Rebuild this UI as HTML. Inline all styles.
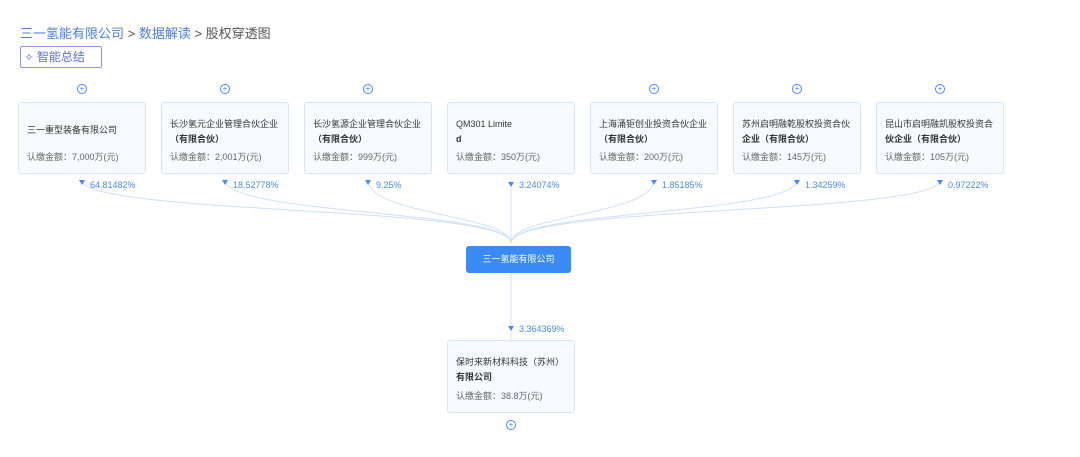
<!DOCTYPE html>
<html><head><meta charset="utf-8"><style>
body{margin:0;width:1080px;height:457px;background:#fff;font-family:"Liberation Sans","Noto Sans CJK SC",sans-serif;position:relative;overflow:hidden;color:#333}
.bc{position:absolute;left:20px;top:23px;font-size:13px;color:#4a7fe0}
.bc span.g{color:#555}
.btn{position:absolute;left:20px;top:46px;width:80px;height:20px;border:1px solid #9b8cf0;border-radius:2px;font-size:12px;color:#5b6ee8;line-height:20px;box-sizing:content-box}
.box{position:absolute;width:126px;height:70px;border:1px solid #d6e6fa;background:#f7fbff;border-radius:3px;font-size:9px;color:#333}
.box .n{position:absolute;left:8px;top:14px;right:6px;line-height:15px}
.box .a{position:absolute;left:8px;bottom:10px;color:#666}
b{font-weight:bold}
.pct{position:absolute;font-size:9px;color:#4a8af0}
.plus{position:absolute;width:8px;height:8px;border:1px solid #4a8af0;border-radius:50%;font-size:8px;line-height:8px;text-align:center;color:#4a8af0}
.main{position:absolute;left:466px;top:246px;width:105px;height:27px;background:#3b8bf5;border-radius:3px;color:#fff;font-size:9px;line-height:27px;text-align:center}
</style></head><body>
<svg width="1080" height="457" style="position:absolute;left:0;top:0">
<g fill="none" stroke="#cfe0f7" stroke-width="1">
<path d="M82 180 C82 215 511 205 511 243"/>
<path d="M225 180 C225 215 511 210 511 243"/>
<path d="M368 180 C368 215 511 215 511 243"/>
<path d="M511 180 L511 243"/>
<path d="M654 180 C654 215 511 215 511 243"/>
<path d="M797 180 C797 215 511 210 511 243"/>
<path d="M940 180 C940 215 511 205 511 243"/>
<path d="M511 273 L511 340"/>
</g>
<g fill="#4a8af0">
<path d="M79 180h6l-3 5z"/><path d="M222 180h6l-3 5z"/><path d="M365 180h6l-3 5z"/><path d="M508 182h6l-3 5z"/><path d="M651 180h6l-3 5z"/><path d="M794 180h6l-3 5z"/><path d="M937 180h6l-3 5z"/><path d="M508 326h6l-3 5z"/>
</g>
</svg>
<div class="bc">三一氢能有限公司 <span class="g">&gt;</span> 数据解读 <span class="g">&gt; 股权穿透图</span></div>
<div class="btn">&nbsp;<span style="font-size:11px">✧</span> 智能总结</div>

<div class="plus" style="left:77px;top:84px">+</div>
<div class="plus" style="left:220px;top:84px">+</div>
<div class="plus" style="left:363px;top:84px">+</div>
<div class="plus" style="left:649px;top:84px">+</div>
<div class="plus" style="left:792px;top:84px">+</div>
<div class="plus" style="left:935px;top:84px">+</div>

<div class="box" style="left:18px;top:102px"><div class="n" style="top:20px">三一重型装备有限公司</div><div class="a">认缴金额：7,000万(元)</div></div>
<div class="box" style="left:161px;top:102px"><div class="n">长沙氢元企业管理合伙企业<br><b>（有限合伙）</b></div><div class="a">认缴金额：2,001万(元)</div></div>
<div class="box" style="left:304px;top:102px"><div class="n">长沙氢源企业管理合伙企业<br><b>（有限合伙）</b></div><div class="a">认缴金额：999万(元)</div></div>
<div class="box" style="left:447px;top:102px"><div class="n">QM301 Limite<br><b>d</b></div><div class="a">认缴金额：350万(元)</div></div>
<div class="box" style="left:590px;top:102px"><div class="n">上海涌钜创业投资合伙企业<br><b>（有限合伙）</b></div><div class="a">认缴金额：200万(元)</div></div>
<div class="box" style="left:733px;top:102px"><div class="n">苏州启明融乾股权投资合伙<br><b>企业（有限合伙）</b></div><div class="a">认缴金额：145万(元)</div></div>
<div class="box" style="left:876px;top:102px"><div class="n">昆山市启明融凯股权投资合<br><b>伙企业（有限合伙）</b></div><div class="a">认缴金额：105万(元)</div></div>

<div class="pct" style="left:90px;top:180px">64.81482%</div>
<div class="pct" style="left:233px;top:180px">18.52778%</div>
<div class="pct" style="left:376px;top:180px">9.25%</div>
<div class="pct" style="left:519px;top:180px">3.24074%</div>
<div class="pct" style="left:662px;top:180px">1.85185%</div>
<div class="pct" style="left:805px;top:180px">1.34259%</div>
<div class="pct" style="left:948px;top:180px">0.97222%</div>

<div class="main">三一氢能有限公司</div>
<div class="pct" style="left:519px;top:324px">3.364369%</div>
<div class="box" style="left:447px;top:340px;height:71px"><div class="n">保时来新材料科技（苏州）<br><b>有限公司</b></div><div class="a">认缴金额：38.8万(元)</div></div>
<div class="plus" style="left:506px;top:420px">+</div>
</body></html>
